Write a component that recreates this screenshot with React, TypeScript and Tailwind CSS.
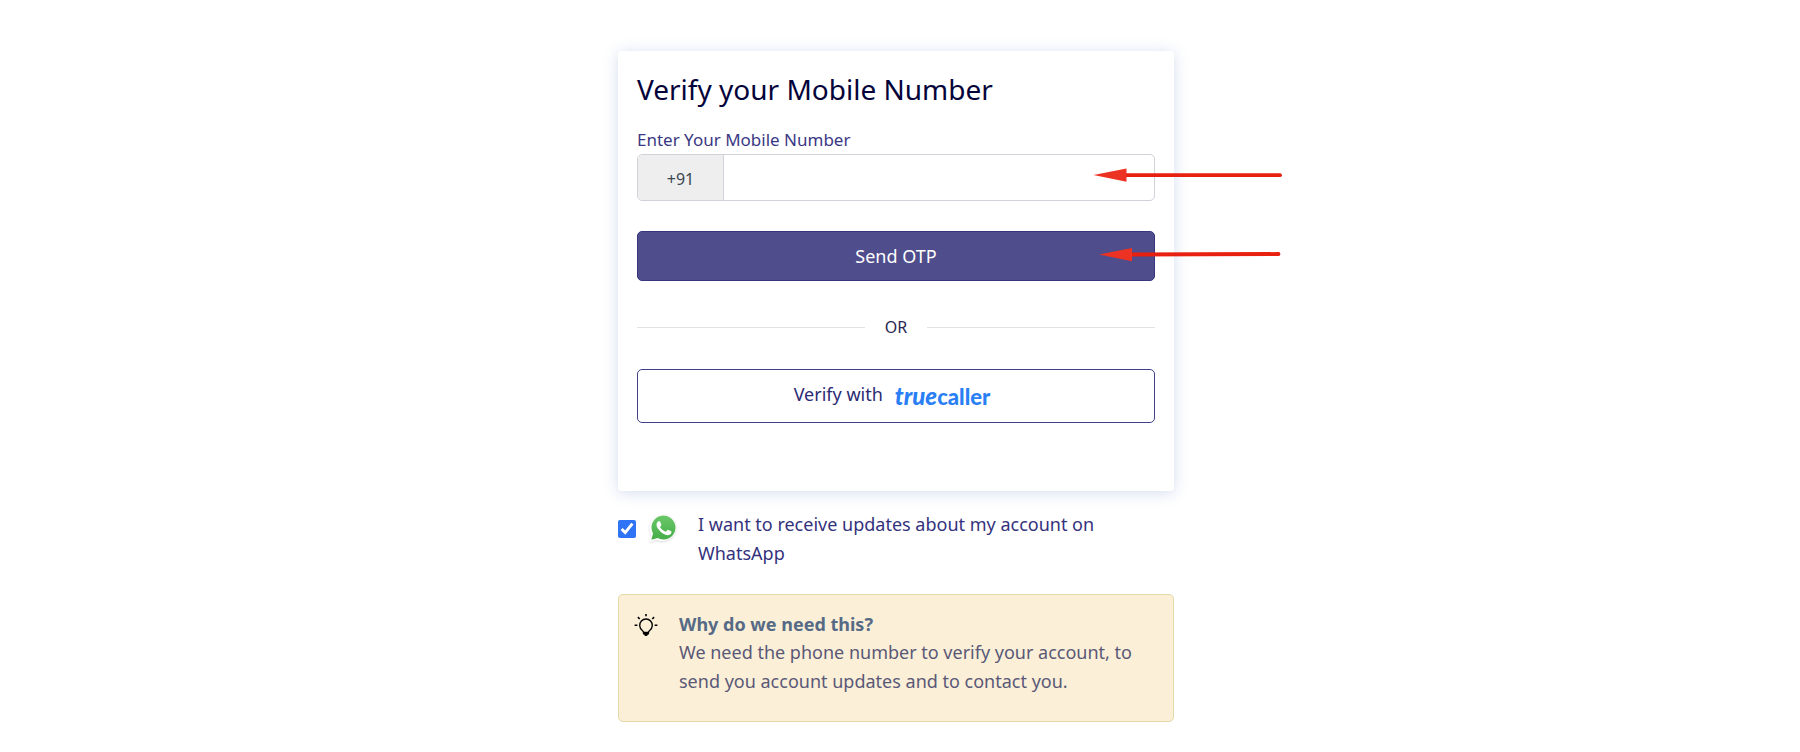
import React, { useState } from "react";

function BulbIcon() {
  return (
    <svg viewBox="0 0 24 24" className="mt-1 h-6 w-6 shrink-0" fill="none" stroke="#000" strokeWidth="1.4" aria-hidden="true">
      <path d="M9.600 18.400c0-1-.6-1.500-1.500-2.200a6.300 6.300 0 1 1 7.800 0c-.9.7-1.500 1.200-1.500 2.200" />
      <path d="M12 0v2.300M3.900 3.100l1.800 1.900M20.100 3.100L18.300 5M.6 11.300h2.800M20.600 11.300h2.800" strokeWidth="1.6" />
      <path d="M8.900 17.800h6.200v1.700c0 .7-.5 1.200-1.200 1.200h-.3c0 .8-.6 1.300-1.600 1.300s-1.600-.5-1.600-1.300h-.3c-.7 0-1.200-.5-1.200-1.200z" fill="#000" stroke="none" />
    </svg>
  );
}

function WhatsAppIcon() {
  return (
    <svg viewBox="0 0 28 28" className="h-7 w-7 shrink-0 drop-shadow-[0_1px_1px_rgba(0,0,0,0.14)]" aria-hidden="true">
      <defs>
        <linearGradient id="wa" x1="0" y1="0" x2="0" y2="1">
          <stop offset="0" stopColor="#6bc869" />
          <stop offset="1" stopColor="#45ad47" />
        </linearGradient>
      </defs>
      <path d="M.2 28l2.100-7.600A13.400 13.400 0 0 1 14.200.2a13.400 13.400 0 1 1-6.300 25.600z" fill="#fff" />
      <path d="M2.300 25.800l1.800-6.300A12 12 0 1 1 8.700 24z" fill="url(#wa)" />
      <path
        d="M11.300 7.900c-.3-.6-.5-.6-.8-.6h-.7c-.3 0-.7.1-1 .5-.3.400-1.300 1.200-1.300 3s1.300 3.600 1.500 3.800c.2.300 2.600 4.100 6.300 5.600 3.100 1.200 3.800 1 4.400.9.700-.1 2.200-.9 2.500-1.800.3-.9.300-1.600.2-1.800-.1-.2-.3-.3-.7-.4l-2.500-1.200c-.3-.1-.6-.2-.9.200-.2.400-.9 1.200-1.200 1.400-.2.300-.4.300-.8.100-.4-.2-1.600-.6-3-1.800-1.100-1-1.800-2.200-2.100-2.600-.2-.4 0-.6.200-.8l.9-1.100c.1-.2.1-.4 0-.7z"
        fill="#fff"
      />
    </svg>
  );
}

function TruecallerLogo() {
  return (
    <span className="flex items-baseline font-['Lato',sans-serif] leading-7 font-black text-[#2a7ff5]">
      <span className="text-2xl leading-7 italic">true</span>
      <span className="text-[22px] leading-7">caller</span>
    </span>
  );
}

function Arrows() {
  return (
    <svg viewBox="0 0 190 95" className="pointer-events-none absolute top-[116px] left-[475px] h-[95px] w-[190px]" aria-hidden="true">
      <g fill="#ec3323" stroke="#e8200f" strokeLinecap="round">
        <path d="M33 8.200H187" strokeWidth="3.8" />
        <path d="M.5 8l33-6.600v13.400z" stroke="none" />
        <path d="M38 87.500L185.500 87" strokeWidth="3.8" />
        <path d="M6 87.500l33-6.600v13.400z" stroke="none" />
      </g>
    </svg>
  );
}

export default function App() {
  const [phone, setPhone] = useState("");
  const [updates, setUpdates] = useState(true);

  return (
    <main className="flex min-h-screen justify-center bg-white pt-[51px] pr-2 pb-7 font-['Noto_Sans','Open_Sans',sans-serif] text-[#2c2a75]">
      <div className="w-full max-w-[556px]">
        <form
          onSubmit={(e) => e.preventDefault()}
          className="relative rounded bg-white px-[19px] pt-[18px] pb-[68px] shadow-[0_2px_15px_rgba(60,100,180,0.22)]"
        >
          <h1 className="text-[28px] leading-10 text-[#04043a]">Verify your Mobile Number</h1>
          <label htmlFor="phone" className="mt-4 block text-[17px] leading-[29px] text-[#3a3883]">
            Enter Your Mobile Number
          </label>
          <div className="flex h-[47px] overflow-hidden rounded-[5px] border border-[#d1d2da]">
            <span className="flex w-[86px] shrink-0 items-center justify-center border-r border-[#d1d2da] bg-[#eeeeee] pt-0.5 text-base text-[#3c4650]">
              +91
            </span>
            <input
              id="phone"
              type="tel"
              value={phone}
              onChange={(e) => setPhone(e.target.value)}
              className="min-w-0 flex-1 px-4 text-base outline-none"
            />
          </div>
          <button type="submit" className="mt-[30px] h-[50px] w-full rounded-[5px] border border-[#37357d] bg-[#4f4d8b] text-lg text-white">
            Send OTP
          </button>
          <div className="mt-8 flex h-7 items-center gap-5 text-base text-[#2a2850]">
            <span className="h-px flex-1 bg-[#e2e2e4]" />
            OR
            <span className="h-px flex-1 bg-[#e2e2e4]" />
          </div>
          <button
            type="button"
            className="mt-7 flex h-[54px] w-full items-center justify-center gap-3 rounded-[5px] border border-[#403e86] bg-white pr-2 text-lg text-[#2c2a75]"
          >
            <span className="pb-1">Verify with</span>
            <TruecallerLogo />
          </button>
          <Arrows />
        </form>

        <div className="mt-[19px] flex items-start">
          <input
            id="updates"
            type="checkbox"
            checked={updates}
            onChange={(e) => setUpdates(e.target.checked)}
            className="mt-[10px] h-[18px] w-[18px] shrink-0 accent-[#2f74f6]"
          />
          <label htmlFor="updates" className="flex items-start pl-[13px] text-lg leading-[29px] text-[#34327d]">
            <span className="mt-1">
              <WhatsAppIcon />
            </span>
            <span className="pl-[21px] pr-16">I want to receive updates about my account on WhatsApp</span>
          </label>
        </div>

        <section className="mt-[26px] flex items-start rounded-[5px] border border-[#e0d9a8] bg-[#fbf0d7] pt-[15px] pr-8 pb-[25px] pl-[15px]">
          <BulbIcon />
          <div className="pl-[21px] text-lg leading-[29px] text-[#5a5877]">
            <h2 className="leading-7 font-bold text-[#566a86]">Why do we need this?</h2>
            <p>We need the phone number to verify your account, to send you account updates and to contact you.</p>
          </div>
        </section>
      </div>
    </main>
  );
}
